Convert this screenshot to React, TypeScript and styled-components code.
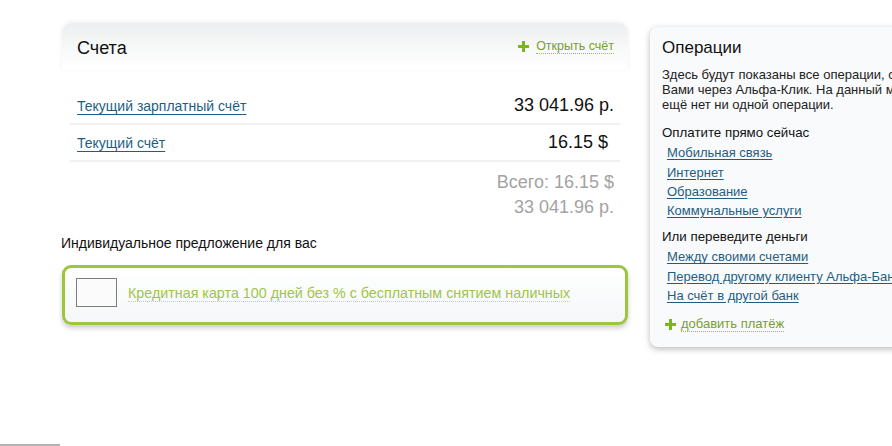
import React from 'react';
import styled, { createGlobalStyle } from 'styled-components';

const GlobalStyle = createGlobalStyle`
  html, body {
    margin: 0;
    padding: 0;
    background: #fff;
    font-family: "Liberation Sans", Arial, sans-serif;
    color: #111;
  }
`;

const Page = styled.div`
  width: 892px;
  height: 446px;
  overflow: hidden;
  display: flex;
  flex-direction: column;
`;

const Columns = styled.div`
  display: flex;
  align-items: flex-start;
  gap: 22px;
  padding: 23px 0 0 62px;
`;

const Main = styled.div`
  width: 566px;
  flex-shrink: 0;
`;

const CardHeader = styled.div`
  height: 47px;
  display: flex;
  align-items: center;
  justify-content: space-between;
  padding: 0 14px 0 15px;
  border-radius: 10px 10px 0 0;
  background: linear-gradient(to bottom, #eceeef 0%, #f8f9f9 55%, #fff 100%);
  box-shadow: 0 -1px 4px rgba(0, 0, 0, 0.07);
`;

const CardTitle = styled.div`
  font-size: 18px;
  color: #111;
  padding-top: 4px;
`;

const AddLink = styled.a`
  display: flex;
  align-items: center;
  gap: 7px;
  font-size: 12.5px;
  color: #7a9e2a;
  text-decoration: none;
  cursor: pointer;

  span {
    border-bottom: 1px dotted #9bbd55;
    line-height: 14px;
  }
`;

const Accounts = styled.div`
  padding: 18px 8px 0 8px;
`;

const AccountRow = styled.div<{ $pad?: number }>`
  height: 35px;
  display: flex;
  align-items: center;
  justify-content: space-between;
  padding: 0 ${(p) => p.$pad ?? 6}px 0 7px;
  border-bottom: 2px solid #f0f1f1;
`;

const AccountLink = styled.a`
  font-size: 14px;
  color: #1d5f84;
  text-decoration: underline;
  text-underline-offset: 3px;
  cursor: pointer;
`;

const Amount = styled.div`
  font-size: 18px;
  color: #111;
`;

const Totals = styled.div`
  padding: 8px 14px 0 0;
  text-align: right;
  font-size: 18px;
  line-height: 25px;
  color: #a3a3a3;
`;

const OfferTitle = styled.div`
  margin: 15px 0 0 -1px;
  font-size: 14px;
  color: #111;
`;

const Offer = styled.div`
  margin-top: 14px;
  height: 54px;
  display: flex;
  align-items: flex-start;
  gap: 11px;
  padding: 0 11px;
  border: 3px solid #9cc63c;
  border-radius: 9px;
  background: linear-gradient(to bottom, #fff 0%, #f5f7f8 100%);
  box-shadow: 0 3px 5px rgba(0, 0, 0, 0.2);
`;

const OfferThumb = styled.div`
  margin-top: 10px;
  width: 39px;
  height: 27px;
  border: 1px solid #7d7d7d;
  background: #fbfbfb;
  flex-shrink: 0;
`;

const OfferLink = styled.a`
  margin-top: 17px;
  font-size: 14.3px;
  line-height: 16px;
  color: #a0c54a;
  text-decoration: none;
  border-bottom: 1px dotted #c2d98a;
  cursor: pointer;
`;

const Side = styled.div`
  width: 260px;
  flex-shrink: 0;
  margin-top: 4px;
  padding: 11px 12px 15px 12px;
  border-radius: 8px;
  background: #f9fafb;
  box-shadow: 0 2px 6px rgba(0, 0, 0, 0.28);
  white-space: nowrap;
`;

const SideTitle = styled.div`
  font-size: 17px;
  color: #111;
`;

const SideText = styled.div`
  margin-top: 9px;
  font-size: 13px;
  line-height: 15px;
  color: #222;
`;

const SideHeading = styled.div<{ $top: number }>`
  margin-top: ${(p) => p.$top}px;
  font-size: 13.3px;
  color: #111;
`;

const SideLinks = styled.div`
  display: flex;
  flex-direction: column;
  align-items: flex-start;
  padding-left: 5px;
  padding-top: 2px;
`;

const SideLink = styled.a`
  margin-top: 3.3px;
  font-size: 13px;
  line-height: 16px;
  color: #1d5f84;
  text-decoration: underline;
  text-underline-offset: 2px;
  cursor: pointer;
`;

const SideAdd = styled(AddLink)`
  margin-top: 13px;
  gap: 5px;
  padding-left: 3px;
  font-size: 13px;
`;

const BottomRule = styled.div`
  margin-top: auto;
  width: 60px;
  height: 2px;
  background: #b3b3b3;
`;

function Plus() {
  return (
    <svg width="11" height="11" viewBox="0 0 11 11">
      <path d="M4 0h3v4h4v3H7v4H4V7H0V4h4z" fill="#7cb51f" />
    </svg>
  );
}

const accounts = [
  { name: 'Текущий зарплатный счёт', amount: '33 041.96 р.', pad: 6 },
  { name: 'Текущий счёт', amount: '16.15 $', pad: 12 },
];

const payLinks = ['Мобильная связь', 'Интернет', 'Образование', 'Коммунальные услуги'];
const transferLinks = ['Между своими счетами', 'Перевод другому клиенту Альфа-Банка', 'На счёт в другой банк'];

export default function App() {
  return (
    <Page>
      <GlobalStyle />
      <Columns>
        <Main>
          <CardHeader>
            <CardTitle>Счета</CardTitle>
            <AddLink>
              <Plus />
              <span>Открыть счёт</span>
            </AddLink>
          </CardHeader>
          <Accounts>
            {accounts.map((a) => (
              <AccountRow key={a.name} $pad={a.pad}>
                <AccountLink>{a.name}</AccountLink>
                <Amount>{a.amount}</Amount>
              </AccountRow>
            ))}
          </Accounts>
          <Totals>
            <div>Всего: 16.15 $</div>
            <div>33 041.96 р.</div>
          </Totals>
          <OfferTitle>Индивидуальное предложение для вас</OfferTitle>
          <Offer>
            <OfferThumb />
            <OfferLink>Кредитная карта 100 дней без % с бесплатным снятием наличных</OfferLink>
          </Offer>
        </Main>
        <Side>
          <SideTitle>Операции</SideTitle>
          <SideText>
            Здесь будут показаны все операции, совершённые
            <br />
            Вами через Альфа-Клик. На данный момент у Вас
            <br />
            ещё нет ни одной операции.
          </SideText>
          <SideHeading $top={13}>Оплатите прямо сейчас</SideHeading>
          <SideLinks>
            {payLinks.map((l) => (
              <SideLink key={l}>{l}</SideLink>
            ))}
          </SideLinks>
          <SideHeading $top={10}>Или переведите деньги</SideHeading>
          <SideLinks>
            {transferLinks.map((l) => (
              <SideLink key={l}>{l}</SideLink>
            ))}
          </SideLinks>
          <SideAdd>
            <Plus />
            <span>добавить платёж</span>
          </SideAdd>
        </Side>
      </Columns>
      <BottomRule />
    </Page>
  );
}
